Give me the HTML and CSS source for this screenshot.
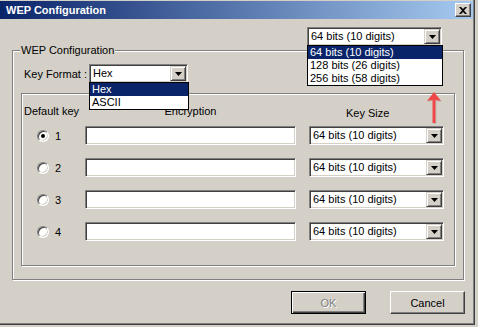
FILE: index.html
```html
<!DOCTYPE html>
<html lang="en">

<head>
    <meta charset="UTF-8">
    <title>WEP Configuration</title>
    <link rel="stylesheet" href="styles.css">
</head>

<body>
    <div class="window">
        <div class="title-bar">
            <span class="title-text">WEP Configuration</span>
            <div class="close-btn">
                <svg width="8" height="7" viewBox="0 0 8 7">
                    <path d="M0 0h2l2 2 2-2h2L5 3.5 8 7H6L4 5 2 7H0l3-3.5z" fill="#000" />
                </svg>
            </div>
        </div>

        <div class="top-row">
            <div class="combo combo-top">
                <span class="combo-value">64 bits (10 digits)</span>
                <span class="combo-btn"><svg width="7" height="4" viewBox="0 0 7 4"><path d="M0 0h7L3.5 4z" fill="#000" /></svg></span>
                <ul class="drop-list">
                    <li class="selected">64 bits (10 digits)</li>
                    <li>128 bits (26 digits)</li>
                    <li>256 bits (58 digits)</li>
                </ul>
            </div>
        </div>

        <div class="group">
            <span class="group-label">WEP Configuration</span>
            <div class="format-row">
                <span class="format-label">Key Format :</span>
                <div class="combo combo-format">
                    <span class="combo-value">Hex</span>
                    <span class="combo-btn"><svg width="7" height="4" viewBox="0 0 7 4"><path d="M0 0h7L3.5 4z" fill="#000" /></svg></span>
                    <ul class="drop-list">
                        <li class="selected">Hex</li>
                        <li>ASCII</li>
                    </ul>
                </div>
            </div>

            <div class="keys-box">
                <div class="key-grid key-head">
                    <span class="head-default">Default key</span>
                    <span class="head-enc">Encryption</span>
                    <span class="head-size">Key Size</span>
                </div>
                <div class="key-grid key-rows">
                    <label class="radio-cell"><span class="radio checked"></span>1</label>
                    <div class="textbox"></div>
                    <div class="combo"><span class="combo-value">64 bits (10 digits)</span><span class="combo-btn"><svg width="7" height="4" viewBox="0 0 7 4"><path d="M0 0h7L3.5 4z" fill="#000" /></svg></span></div>

                    <label class="radio-cell"><span class="radio"></span>2</label>
                    <div class="textbox"></div>
                    <div class="combo"><span class="combo-value">64 bits (10 digits)</span><span class="combo-btn"><svg width="7" height="4" viewBox="0 0 7 4"><path d="M0 0h7L3.5 4z" fill="#000" /></svg></span></div>

                    <label class="radio-cell"><span class="radio"></span>3</label>
                    <div class="textbox"></div>
                    <div class="combo"><span class="combo-value">64 bits (10 digits)</span><span class="combo-btn"><svg width="7" height="4" viewBox="0 0 7 4"><path d="M0 0h7L3.5 4z" fill="#000" /></svg></span></div>

                    <label class="radio-cell"><span class="radio"></span>4</label>
                    <div class="textbox"></div>
                    <div class="combo"><span class="combo-value">64 bits (10 digits)</span><span class="combo-btn"><svg width="7" height="4" viewBox="0 0 7 4"><path d="M0 0h7L3.5 4z" fill="#000" /></svg></span></div>
                </div>
            </div>
        </div>

        <div class="buttons">
            <button class="btn btn-default" disabled>OK</button>
            <button class="btn">Cancel</button>
        </div>

        <!-- red arrow pointing at the key size list -->
        <svg class="red-arrow" width="20" height="36" viewBox="0 0 20 36">
            <path d="M10 2 L17 11 L11.5 10 L11.5 33 L8.5 33 L8.5 10 L3 11 Z" fill="#b0a8a0" opacity="0.5" transform="translate(1 1)" />
            <path d="M10 2 L17 11 L11.5 10 L11.5 33 L8.5 33 L8.5 10 L3 11 Z" fill="#f04848" />
        </svg>
    </div>
</body>

</html>
```

FILE: styles.css
```css
body {
    margin: 0;
    background-color: #d4d0c8;
    font-family: "Liberation Sans", Arial, sans-serif;
    font-size: 11px;
    color: #000;
}

.window {
    position: relative;
    width: 475px;
    height: 325px;
    box-sizing: border-box;
    padding-top: 1px;
    background-color: #d4d0c8;
    border-right: 1px solid #404040;
    border-bottom: 1px solid #404040;
    box-shadow: inset -1px -1px #808080;
}

.title-bar {
    height: 18px;
    margin-right: 1px;
    display: flex;
    align-items: center;
    justify-content: space-between;
    padding: 0 2px 0 6px;
    background: linear-gradient(to right, #0a246a, #a6caf0);
}

.title-text {
    color: #fff;
    font-weight: bold;
}

.close-btn {
    width: 16px;
    height: 14px;
    box-sizing: border-box;
    display: flex;
    align-items: center;
    justify-content: center;
    background-color: #d4d0c8;
    border: 1px solid;
    border-color: #fff #404040 #404040 #fff;
    box-shadow: inset -1px -1px #808080;
}

.top-row {
    padding: 8px 0 0 307px;
}

.combo {
    position: relative;
    display: flex;
    width: 135px;
    height: 19px;
    box-sizing: border-box;
    padding: 1px;
    background-color: #fff;
    border: 1px solid;
    border-color: #808080 #fff #fff #808080;
    box-shadow: inset 1px 1px #404040, inset -1px -1px #d4d0c8;
}

.combo-format {
    width: 99px;
}

.combo-value {
    flex: 1;
    padding-left: 2px;
    line-height: 15px;
    white-space: nowrap;
    overflow: hidden;
}

.combo-btn {
    width: 16px;
    height: 15px;
    box-sizing: border-box;
    display: flex;
    align-items: center;
    justify-content: center;
    background-color: #d4d0c8;
    border: 1px solid;
    border-color: #d4d0c8 #404040 #404040 #d4d0c8;
    box-shadow: inset 1px 1px #fff, inset -1px -1px #808080;
}

.drop-list {
    position: absolute;
    top: 100%;
    left: -1px;
    z-index: 5;
    width: 136px;
    box-sizing: border-box;
    margin: 0;
    padding: 0;
    list-style: none;
    background-color: #fff;
    border: 1px solid #000;
}

.combo-format .drop-list {
    width: 100px;
}

.drop-list li {
    height: 13px;
    line-height: 13px;
    padding-left: 2px;
}

.drop-list li.selected {
    background-color: #0a246a;
    color: #fff;
}

.group {
    position: relative;
    width: 452px;
    box-sizing: border-box;
    margin: 4px 0 0 12px;
    padding: 13px 8px 13px 8px;
    border: 1px solid #808080;
    box-shadow: inset 1px 1px #fff, 1px 1px #fff;
}

.group-label {
    position: absolute;
    top: -7px;
    left: 7px;
    padding: 0 1px;
    line-height: 13px;
    background-color: #d4d0c8;
}

.format-row {
    display: flex;
    align-items: center;
    padding-left: 3px;
    position: relative;
    z-index: 4;
}

.format-label {
    width: 65px;
}

.keys-box {
    height: 173px;
    box-sizing: border-box;
    margin-top: 10px;
    padding: 11px 0 0 2px;
    border: 1px solid #808080;
    box-shadow: inset 1px 1px #fff, 1px 1px #fff;
}

.key-grid {
    display: grid;
    grid-template-columns: 61px 224px 135px;
}

.key-head {
    line-height: 13px;
}

.head-default {
    white-space: nowrap;
}

.head-enc {
    width: 211px;
    text-align: center;
}

.head-size {
    padding-left: 37px;
    position: relative;
    top: 2px;
}

.key-rows {
    margin-top: 8px;
    row-gap: 13px;
}

.radio-cell {
    display: flex;
    align-items: center;
    gap: 6px;
    padding-left: 13px;
}

.radio {
    position: relative;
    width: 12px;
    height: 12px;
    box-sizing: border-box;
    border-radius: 50%;
    background-color: #fff;
    border: 1px solid;
    border-color: #808080 #fff #fff #808080;
    box-shadow: inset 1px 1px #404040, inset -1px -1px #d4d0c8;
}

.radio.checked::after {
    content: "";
    position: absolute;
    top: 3px;
    left: 3px;
    width: 4px;
    height: 4px;
    border-radius: 50%;
    background-color: #000;
}

.textbox {
    width: 211px;
    height: 19px;
    box-sizing: border-box;
    background-color: #fff;
    border: 1px solid;
    border-color: #808080 #fff #fff #808080;
    box-shadow: inset 1px 1px #404040, inset -1px -1px #d4d0c8;
}

.buttons {
    display: flex;
    gap: 24px;
    margin-top: 11px;
    padding-left: 291px;
}

.btn {
    width: 75px;
    height: 23px;
    box-sizing: border-box;
    padding: 0;
    font-family: inherit;
    font-size: 11px;
    color: #000;
    background-color: #d4d0c8;
    border: 1px solid;
    border-color: #fff #404040 #404040 #fff;
    box-shadow: inset -1px -1px #808080;
}

.btn-default {
    border-color: #000;
    box-shadow: inset 1px 1px #fff, inset -1px -1px #404040, inset -2px -2px #808080;
    color: #808080;
    text-shadow: 1px 1px #fff;
}

.red-arrow {
    position: absolute;
    left: 424px;
    top: 90px;
}
```
